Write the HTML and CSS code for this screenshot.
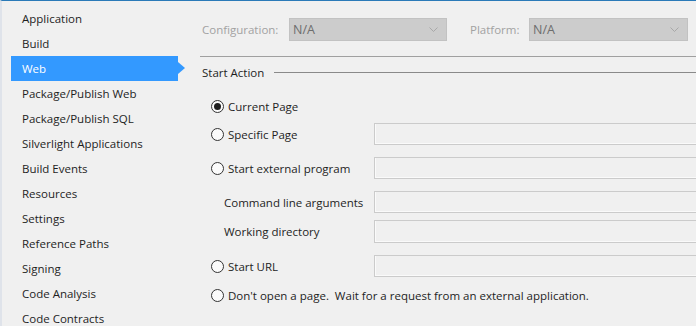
FILE: index.html
```html
<!DOCTYPE html>
<html lang="en">
<head>
   <meta charset="UTF-8">
   <title>Project Properties - Web</title>
   <link rel="stylesheet" href="styles.css">
</head>
<body>
   <div class="page flex">
      <!-- left tab list -->
      <ul class="tabs">
         <li>Application</li>
         <li>Build</li>
         <li class="active">Web</li>
         <li>Package/Publish Web</li>
         <li>Package/Publish SQL</li>
         <li>Silverlight Applications</li>
         <li>Build Events</li>
         <li>Resources</li>
         <li>Settings</li>
         <li>Reference Paths</li>
         <li>Signing</li>
         <li>Code Analysis</li>
         <li>Code Contracts</li>
      </ul>

      <div class="panel">
         <div class="topbar flex align-center">
            <span class="dim conf-label">Configuration:</span>
            <div class="combo flex align-center justif-between conf">
               <span>N/A</span>
               <svg width="9" height="6" viewBox="0 0 9 6"><polyline points="0.5,0.5 4.5,4.5 8.5,0.5" fill="none" stroke="#a8a8a8" stroke-width="1"/></svg>
            </div>
            <span class="dim plat-label">Platform:</span>
            <div class="combo flex align-center justif-between plat">
               <span>N/A</span>
               <svg width="9" height="6" viewBox="0 0 9 6"><polyline points="0.5,0.5 4.5,4.5 8.5,0.5" fill="none" stroke="#a8a8a8" stroke-width="1"/></svg>
            </div>
         </div>

         <div class="sep"></div>

         <div class="section flex align-center">
            <span>Start Action</span>
            <div class="rule"></div>
         </div>

         <div class="row r-current">
            <span class="radio checked"></span><span>Current Page</span>
         </div>
         <div class="row r-specific">
            <div class="lbl"><span class="radio"></span><span>Specific Page</span></div>
            <div class="box"></div>
         </div>
         <div class="row r-ext">
            <div class="lbl"><span class="radio"></span><span>Start external program</span></div>
            <div class="box"></div>
         </div>
         <div class="row r-cmd">
            <div class="lbl sub">Command line arguments</div>
            <div class="box"></div>
         </div>
         <div class="row r-work">
            <div class="lbl sub">Working directory</div>
            <div class="box tall"></div>
         </div>
         <div class="row r-url">
            <div class="lbl"><span class="radio"></span><span>Start URL</span></div>
            <div class="box"></div>
         </div>
         <div class="row r-none">
            <span class="radio"></span><span>Don't open a page.&nbsp; Wait for a request from an external application.</span>
         </div>

         <div class="section flex align-center r-servers">
            <span>Servers</span>
         </div>
      </div>
   </div>
</body>
</html>
```

FILE: styles.css
```css
* { padding: 0;
    margin: 0;
    box-sizing: border-box;
    font-family: "Open Sans", "Noto Sans", sans-serif;
}

.flex { display: flex;}
.align-center { align-items: center;}
.justif-between { justify-content: space-between;}

html, body {
   height: 100%;
   overflow: hidden;
}
body {
   background-color: #f0f0f0;
   color: #1e1e1e;
   font-size: 11.5px;
   border-top: 1px solid #2a7ab8;
   border-left: 2px solid #dfe3ea;
}
.page {
   height: 100%;
}

/** tab list */
.tabs {
   list-style: none;
   width: 198px;
   padding-top: 5px;
   flex-shrink: 0;
}
.tabs li {
   height: 25px;
   line-height: 25px;
   margin-left: 9px;
   padding-left: 11px;
   width: 167px;
   white-space: nowrap;
   position: relative;
}
.tabs li.active {
   background-color: #3399ff;
   color: white;
}
.tabs li.active::after {
   content: "";
   position: absolute;
   right: -7px;
   top: 6px;
   border-left: 7px solid #3399ff;
   border-top: 6px solid transparent;
   border-bottom: 6px solid transparent;
}

/** right panel */
.panel {
   flex: 1;
   padding-top: 17px;
   overflow: hidden;
}
.topbar {
   height: 23px;
   padding-left: 2px;
}
.dim {
   color: #a2a2a2;
}
.conf-label {
   width: 87px;
}
.plat-label {
   width: 59px;
   margin-left: 23px;
}
.combo {
   height: 23px;
   background-color: #cccccc;
   border: 1px solid #c2c2c2;
   color: #6d6d6d;
   padding: 0 8px 0 3px;
   font-size: 12.5px;
}
.conf {
   width: 158px;
}
.plat {
   width: 159px;
}
.sep {
   height: 1px;
   background-color: #a0a0a0;
   margin-top: 15px;
}
.section {
   height: 22px;
   margin-top: 4px;
   padding-left: 2px;
}
.rule {
   flex: 1;
   height: 1px;
   background-color: #8a8a8a;
   margin-left: 10px;
}

/** option rows */
.row {
   display: flex;
   align-items: center;
   height: 22px;
   white-space: nowrap;
}
.lbl {
   display: flex;
   align-items: center;
   width: 174px;
   flex-shrink: 0;
}
.lbl.sub {
   padding-left: 24px;
}
.box {
   flex: 1;
   height: 22px;
   margin-right: -4px;
   border: 1px solid #cbcbcb;
   box-shadow: inset 0 -1px 0 #fafafa, inset 1px 0 0 #fafafa;
}
.box.tall {
   height: 23px;
}
.radio {
   width: 13px;
   height: 13px;
   border-radius: 50%;
   border: 1px solid #333;
   background-color: #fbfbfb;
   margin: 0 4px 0 11px;
   flex-shrink: 0;
   position: relative;
}
.radio.checked::after {
   content: "";
   position: absolute;
   left: 2px;
   top: 2px;
   width: 7px;
   height: 7px;
   border-radius: 50%;
   background-color: #1e1e1e;
}
.r-current { margin-top: 12px;}
.r-specific { margin-top: 6px;}
.r-ext { margin-top: 12px;}
.r-cmd { margin-top: 12px;}
.r-work { margin-top: 7px; height: 23px;}
.r-url { margin-top: 12px;}
.r-none { margin-top: 7px;}
.r-servers { margin-top: 27px;}
```
